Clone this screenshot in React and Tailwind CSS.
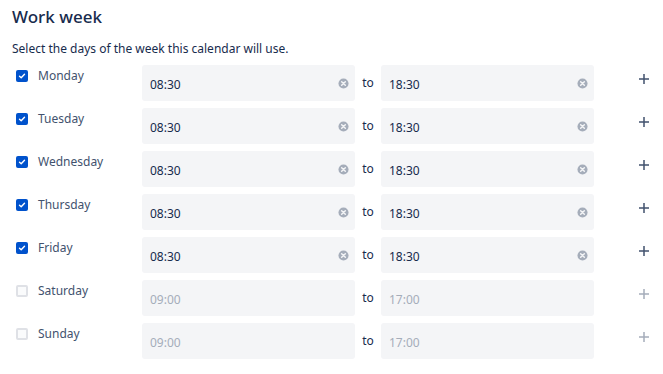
import React from "react";

const days = [
  { name: "Monday", on: true, from: "08:30", to: "18:30" },
  { name: "Tuesday", on: true, from: "08:30", to: "18:30" },
  { name: "Wednesday", on: true, from: "08:30", to: "18:30" },
  { name: "Thursday", on: true, from: "08:30", to: "18:30" },
  { name: "Friday", on: true, from: "08:30", to: "18:30" },
  { name: "Saturday", on: false, from: "09:00", to: "17:00" },
  { name: "Sunday", on: false, from: "09:00", to: "17:00" },
];

function Check({ on }) {
  return on ? (
    <span className="flex h-[12px] w-[12px] items-center justify-center rounded-[2px] bg-[#0052cc]">
      <svg width="8" height="8" viewBox="0 0 8 8" fill="none">
        <path d="M1.5 4.2 L3.2 5.8 L6.5 2.3" stroke="white" strokeWidth="1.4" strokeLinecap="round" strokeLinejoin="round" />
      </svg>
    </span>
  ) : (
    <span className="block h-[12px] w-[12px] rounded-[2px] border-2 border-[#dfe1e6] bg-[#fafbfc]" />
  );
}

function Clear() {
  return (
    <svg width="11" height="11" viewBox="0 0 12 12">
      <circle cx="6" cy="6" r="5.5" fill="#a5adba" />
      <path d="M4 4 L8 8 M8 4 L4 8" stroke="#f4f5f7" strokeWidth="1.6" strokeLinecap="round" />
    </svg>
  );
}

function Field({ value, on }) {
  return (
    <div className="flex h-[36px] w-[213px] items-center justify-between rounded-[3px] bg-[#f4f5f7] pl-[8px] pr-[6px]">
      <span className={"pt-[4px] text-[12px] " + (on ? "text-[#172b4d]" : "text-[#a5adba]")}>{value}</span>
      {on && <Clear />}
    </div>
  );
}

export default function App() {
  return (
    <div className="min-h-[374px] w-[663px] bg-white pl-[12px] font-['Noto_Sans',sans-serif] text-[#172b4d]">
      <div className="pt-[5px] text-[17px] leading-[24px] font-medium">Work week</div>
      <div className="mt-[12px] text-[12px] leading-[16px] text-[#172b4d]">
        Select the days of the week this calendar will use.
      </div>
      <div className="mt-[8px] flex flex-col gap-[7px]">
        {days.map((d) => (
          <div key={d.name} className="flex items-start">
            <div className="flex w-[130px] items-center pl-[4px] pt-[3px]">
              <Check on={d.on} />
              <span className="ml-[10px] text-[12px] leading-[16px] text-[#42526e]">{d.name}</span>
            </div>
            <Field value={d.from} on={d.on} />
            <div className="flex h-[36px] w-[26px] items-center justify-center text-[12px] text-[#172b4d]">to</div>
            <div className="w-[212px]">
              <Field value={d.to} on={d.on} />
            </div>
            <div className="ml-[46px] flex h-[28px] w-[10px] items-center justify-center">
              <svg width="10" height="10" viewBox="0 0 10 10">
                <path d="M5 0 V10 M0 5 H10" stroke={d.on ? "#42526e" : "#a5adba"} strokeWidth="1.5" />
              </svg>
            </div>
          </div>
        ))}
      </div>
    </div>
  );
}
